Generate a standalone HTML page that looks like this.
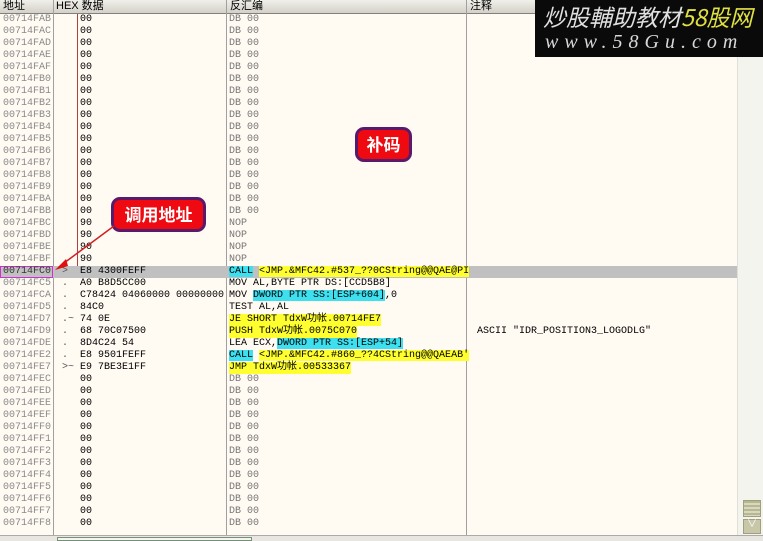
<!DOCTYPE html>
<html><head><meta charset="utf-8"><style>
*{margin:0;padding:0;box-sizing:border-box}
body{width:763px;height:541px;overflow:hidden;background:#fffaf2;font-family:"Liberation Mono","Noto Sans CJK SC",monospace;font-size:10px;position:relative}
.hdr{position:absolute;top:0;left:0;width:737px;height:14px;background:linear-gradient(#f0f0ea,#d4d0c8);border-bottom:1px solid #808080;font-family:"Liberation Sans","Noto Sans CJK SC",sans-serif;font-size:11px;line-height:13px;color:#000}
.hdr span{position:absolute;top:0}
.vl{position:absolute;width:1px;background:#a0a0a0}
#rows{position:absolute;top:14px;left:0;width:737px}
.r{position:relative;height:12px;line-height:12px;white-space:pre}
.r span{position:absolute;top:0}
.a{left:3px;color:#8a8a8a}
.m{left:62px;color:#555}
.h{left:80px;color:#000}
.d{left:229px;color:#000}
.dg{color:#777}
.c{left:477px;color:#000}
.cy{background:#3ee0f0}
.ye{background:#ffff30}
.sel{background:#c0c0c0}
.bub{position:absolute;background:#ee0a10;border:3px solid #5a1a6a;border-radius:9px;color:#fff;font-family:"Noto Sans CJK SC",sans-serif;font-weight:bold;text-align:center}
</style></head><body>
<div class="hdr"><span style="left:3px">地址</span><span style="left:56px">HEX 数据</span><span style="left:230px">反汇编</span><span style="left:470px">注释</span></div>
<div class="vl" style="left:53px;top:0;height:535px"></div>
<div class="vl" style="left:226px;top:0;height:535px"></div>
<div class="vl" style="left:466px;top:0;height:535px"></div>
<div style="position:absolute;left:77px;top:14px;width:1px;height:258px;background:#b04040"></div>
<div id="rows">
<div class="r"><span class="a">00714FAB</span><span class="h">00</span><span class="d dg">DB 00</span></div>
<div class="r"><span class="a">00714FAC</span><span class="h">00</span><span class="d dg">DB 00</span></div>
<div class="r"><span class="a">00714FAD</span><span class="h">00</span><span class="d dg">DB 00</span></div>
<div class="r"><span class="a">00714FAE</span><span class="h">00</span><span class="d dg">DB 00</span></div>
<div class="r"><span class="a">00714FAF</span><span class="h">00</span><span class="d dg">DB 00</span></div>
<div class="r"><span class="a">00714FB0</span><span class="h">00</span><span class="d dg">DB 00</span></div>
<div class="r"><span class="a">00714FB1</span><span class="h">00</span><span class="d dg">DB 00</span></div>
<div class="r"><span class="a">00714FB2</span><span class="h">00</span><span class="d dg">DB 00</span></div>
<div class="r"><span class="a">00714FB3</span><span class="h">00</span><span class="d dg">DB 00</span></div>
<div class="r"><span class="a">00714FB4</span><span class="h">00</span><span class="d dg">DB 00</span></div>
<div class="r"><span class="a">00714FB5</span><span class="h">00</span><span class="d dg">DB 00</span></div>
<div class="r"><span class="a">00714FB6</span><span class="h">00</span><span class="d dg">DB 00</span></div>
<div class="r"><span class="a">00714FB7</span><span class="h">00</span><span class="d dg">DB 00</span></div>
<div class="r"><span class="a">00714FB8</span><span class="h">00</span><span class="d dg">DB 00</span></div>
<div class="r"><span class="a">00714FB9</span><span class="h">00</span><span class="d dg">DB 00</span></div>
<div class="r"><span class="a">00714FBA</span><span class="h">00</span><span class="d dg">DB 00</span></div>
<div class="r"><span class="a">00714FBB</span><span class="h">00</span><span class="d dg">DB 00</span></div>
<div class="r"><span class="a">00714FBC</span><span class="h">90</span><span class="d dg">NOP</span></div>
<div class="r"><span class="a">00714FBD</span><span class="h">90</span><span class="d dg">NOP</span></div>
<div class="r"><span class="a">00714FBE</span><span class="h">90</span><span class="d dg">NOP</span></div>
<div class="r"><span class="a">00714FBF</span><span class="h">90</span><span class="d dg">NOP</span></div>
<div class="r sel"><span class="a" style="left:0;width:53px;height:12px;border:1px solid #d030d0;padding-left:2px;line-height:10px;color:#333">00714FC0</span><span class="m">&gt;</span><span class="h">E8 4300FEFF</span><span class="d"><b class="cy" style="font-weight:normal">CALL</b> <b class="ye" style="font-weight:normal">&lt;JMP.&amp;MFC42.#537_??0CString@@QAE@PI</b></span></div>
<div class="r"><span class="a">00714FC5</span><span class="m">.</span><span class="h">A0 B8D5CC00</span><span class="d">MOV AL,BYTE PTR DS:[CCD5B8]</span></div>
<div class="r"><span class="a">00714FCA</span><span class="m">.</span><span class="h">C78424 04060000 00000000</span><span class="d">MOV <b class="cy" style="font-weight:normal">DWORD PTR SS:[ESP+604]</b>,0</span></div>
<div class="r"><span class="a">00714FD5</span><span class="m">.</span><span class="h">84C0</span><span class="d">TEST AL,AL</span></div>
<div class="r"><span class="a">00714FD7</span><span class="m">.~</span><span class="h">74 0E</span><span class="d ye">JE SHORT TdxW功帐.00714FE7</span></div>
<div class="r"><span class="a">00714FD9</span><span class="m">.</span><span class="h">68 70C07500</span><span class="d ye">PUSH TdxW功帐.0075C070</span><span class="c">ASCII "IDR_POSITION3_LOGODLG"</span></div>
<div class="r"><span class="a">00714FDE</span><span class="m">.</span><span class="h">8D4C24 54</span><span class="d">LEA ECX,<b class="cy" style="font-weight:normal">DWORD PTR SS:[ESP+54]</b></span></div>
<div class="r"><span class="a">00714FE2</span><span class="m">.</span><span class="h">E8 9501FEFF</span><span class="d"><b class="cy" style="font-weight:normal">CALL</b> <b class="ye" style="font-weight:normal">&lt;JMP.&amp;MFC42.#860_??4CString@@QAEAB'</b></span></div>
<div class="r"><span class="a">00714FE7</span><span class="m">&gt;~</span><span class="h">E9 7BE3E1FF</span><span class="d ye">JMP TdxW功帐.00533367</span></div>
<div class="r"><span class="a">00714FEC</span><span class="h">00</span><span class="d dg">DB 00</span></div>
<div class="r"><span class="a">00714FED</span><span class="h">00</span><span class="d dg">DB 00</span></div>
<div class="r"><span class="a">00714FEE</span><span class="h">00</span><span class="d dg">DB 00</span></div>
<div class="r"><span class="a">00714FEF</span><span class="h">00</span><span class="d dg">DB 00</span></div>
<div class="r"><span class="a">00714FF0</span><span class="h">00</span><span class="d dg">DB 00</span></div>
<div class="r"><span class="a">00714FF1</span><span class="h">00</span><span class="d dg">DB 00</span></div>
<div class="r"><span class="a">00714FF2</span><span class="h">00</span><span class="d dg">DB 00</span></div>
<div class="r"><span class="a">00714FF3</span><span class="h">00</span><span class="d dg">DB 00</span></div>
<div class="r"><span class="a">00714FF4</span><span class="h">00</span><span class="d dg">DB 00</span></div>
<div class="r"><span class="a">00714FF5</span><span class="h">00</span><span class="d dg">DB 00</span></div>
<div class="r"><span class="a">00714FF6</span><span class="h">00</span><span class="d dg">DB 00</span></div>
<div class="r"><span class="a">00714FF7</span><span class="h">00</span><span class="d dg">DB 00</span></div>
<div class="r"><span class="a">00714FF8</span><span class="h">00</span><span class="d dg">DB 00</span></div>
</div>
<div style="position:absolute;left:737px;top:0;width:26px;height:535px;background:#f4f4ee;border-left:1px solid #e0e0d8"></div>
<div style="position:absolute;left:743px;top:500px;width:18px;height:17px;background:repeating-linear-gradient(#b8b890 0 2px,#d8d8c0 2px 4px);border:1px solid #a0a080"></div>
<div style="position:absolute;left:743px;top:519px;width:18px;height:15px;background:#c8c8a8;border:1px solid #a0a080;color:#fff;font-size:10px;line-height:12px;text-align:center">∨</div>
<div style="position:absolute;left:0;top:535px;width:763px;height:6px;background:#e8e6e0;border-top:1px solid #b0a8a8"></div>
<div style="position:absolute;left:57px;top:537px;width:195px;height:4px;border:1px solid #789078;background:#f4f4f0"></div>
<div style="position:absolute;left:535px;top:0;width:228px;height:57px;background:#0a0a0a;font-family:'Noto Sans CJK SC',sans-serif;font-style:italic">
<div style="position:absolute;left:8px;top:1px;font-size:23px;line-height:30px;color:#e0e0e0;white-space:nowrap">炒股輔助教材<span style="color:#e0e040">58股网</span></div>
<div style="position:absolute;left:10px;top:30px;font-family:'Liberation Serif',serif;font-size:20px;line-height:24px;color:#d8d8d8;letter-spacing:6px;white-space:nowrap">www.58Gu.com</div>
</div>
<div class="bub" style="left:355px;top:127px;width:57px;height:35px;font-size:17px;line-height:28px">补码</div>
<div class="bub" style="left:111px;top:197px;width:95px;height:35px;font-size:17px;line-height:28px">调用地址</div>
<svg style="position:absolute;left:0;top:0" width="763" height="541"><line x1="114" y1="226" x2="60" y2="266" stroke="#d02020" stroke-width="1.5"/><polygon points="55,270 66,259 68,266" fill="#e01010"/></svg>
</body></html>
